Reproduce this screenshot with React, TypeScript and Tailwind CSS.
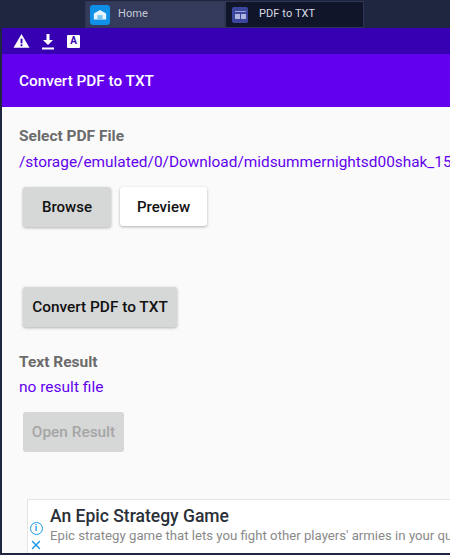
import { X } from "lucide-react";

function HomeIcon() {
  return (
    <div className="flex size-[20px] items-center justify-center rounded-[3px] bg-[#0f8fe6]">
      <svg viewBox="0 0 16 12" className="w-[14px]">
        <path d="M1 5 8 1l7 4v7H1z" fill="#e8f4fb" />
        <rect x="5" y="7" width="6" height="5" fill="#7cc4ee" />
      </svg>
    </div>
  );
}

function PdfIcon() {
  return (
    <div className="flex size-[16px] flex-col items-center justify-center gap-[2px] rounded-[2px] bg-[#3a479c]">
      <div className="h-px w-[11px] bg-[#9aa3d4]" />
      <div className="flex gap-px">
        <div className="h-[5px] w-[5px] bg-[#aeb6de]" />
        <div className="h-[5px] w-[5px] bg-[#aeb6de]" />
      </div>
    </div>
  );
}

function StatusIcons() {
  return (
    <div className="flex h-[26px] items-center pl-[11px]">
      <svg viewBox="0 0 18 16" className="w-[17px]">
        <path d="M9 1 17.5 15.5H.5z" fill="#fff" />
        <rect x="8" y="6" width="2" height="5" fill="#3700b3" />
        <rect x="8" y="12" width="2" height="2" fill="#3700b3" />
      </svg>
      <svg viewBox="0 0 14 17" className="ml-[11px] w-[14px]">
        <path d="M5.5 1h3v6H12l-5 5-5-5h3.5z" fill="#fff" />
        <rect x="1" y="14.5" width="12" height="2" fill="#fff" />
      </svg>
      <div className="ml-[12px] flex size-[13px] items-center justify-center rounded-[1px] bg-white text-[10px] leading-none font-bold text-[#3700b3]">
        A
      </div>
    </div>
  );
}

export default function App() {
  return (
    <div className="flex h-[555px] w-[450px] flex-col overflow-hidden bg-[#1e2640] font-['Roboto',sans-serif]">
      <div className="flex h-[28px] shrink-0 pl-[85px]">
        <div className="mt-px flex w-[140px] items-center gap-[8px] border border-[#2f3654] bg-[#333a5a] pl-[4px] text-[11px] tracking-[0.1px] text-[#c6cad6]">
          <HomeIcon />
          <span>Home</span>
        </div>
        <div className="mt-px flex w-[139px] items-center gap-[11px] border border-[#2f3654] bg-[#10152a] pl-[6px] text-[11px] tracking-[0.1px] text-[#d8dbe4]">
          <PdfIcon />
          <span>PDF to TXT</span>
        </div>
      </div>

      <div className="mb-[2px] ml-[2px] flex min-h-0 flex-1 flex-col">
        <div className="shrink-0 bg-[#3700b3]">
          <StatusIcons />
        </div>
        <div className="flex h-[53px] shrink-0 items-center bg-[#6200ee] pt-[2px] pl-[17px] text-[15.3px] font-medium text-white">
          Convert PDF to TXT
        </div>

        <div className="flex min-h-0 flex-1 flex-col bg-[#fafafa] pl-[17px]">
          <div className="mt-[20px] text-[15.5px] leading-[19px] font-bold text-[#6b6b6b]">Select PDF File</div>
          <div className="mt-[7px] overflow-hidden text-[15.4px] leading-[19px] whitespace-nowrap text-[#6200ee]">
            /storage/emulated/0/Download/midsummernightsd00shak_15
          </div>
          <div className="mt-[15px] ml-[4px] flex gap-[9px]">
            <div className="flex h-[40px] w-[88px] items-center justify-center rounded-[3px] bg-[#d6d7d7] text-[15px] font-medium text-[#111] shadow-[0_1px_3px_rgba(0,0,0,0.3)]">
              Browse
            </div>
            <div className="flex h-[39px] w-[87px] items-center justify-center rounded-[3px] bg-white pt-[2px] text-[15px] font-medium text-[#111] shadow-[0_1px_3px_rgba(0,0,0,0.3)]">
              Preview
            </div>
          </div>
          <div className="mt-[60px] ml-[4px] flex h-[40px] w-[154px] items-center justify-center rounded-[3px] bg-[#d6d7d7] pt-[2px] text-[15.4px] font-medium text-[#111] shadow-[0_1px_3px_rgba(0,0,0,0.3)]">
            Convert PDF to TXT
          </div>
          <div className="mt-[26px] text-[15.5px] leading-[19px] font-bold text-[#6b6b6b]">Text Result</div>
          <div className="mt-[6px] text-[15.5px] leading-[19px] text-[#6200ee]">no result file</div>
          <div className="mt-[15px] ml-[4px] flex h-[40px] w-[101px] items-center justify-center rounded-[3px] bg-[#d6d7d7] pt-[2px] text-[15.4px] font-medium text-[#a6a6a6]">
            Open Result
          </div>

          <div className="mt-auto ml-[8px] flex h-[54px] border-t border-l border-[#e4e4e4] bg-white">
            <div className="flex w-[16px] shrink-0 flex-col items-center justify-end gap-[3px] pb-px">
              <div className="flex size-[13px] items-center justify-center rounded-full border-[1.5px] border-[#1a9ae6] text-[9px] leading-none font-bold text-[#1a9ae6]">
                i
              </div>
              <X className="size-[14px] text-[#1a9ae6]" strokeWidth={2.5} />
            </div>
            <div className="min-w-0 flex-1 overflow-hidden pt-[5px] pl-[6px] whitespace-nowrap">
              <div className="text-[17.5px] leading-[22px] font-medium text-[#2a2f38]">An Epic Strategy Game</div>
              <div className="text-[13.2px] leading-[17px] text-[#8a8a8a]">
                Epic strategy game that lets you fight other players' armies in your qu
              </div>
            </div>
          </div>
        </div>
      </div>
    </div>
  );
}
